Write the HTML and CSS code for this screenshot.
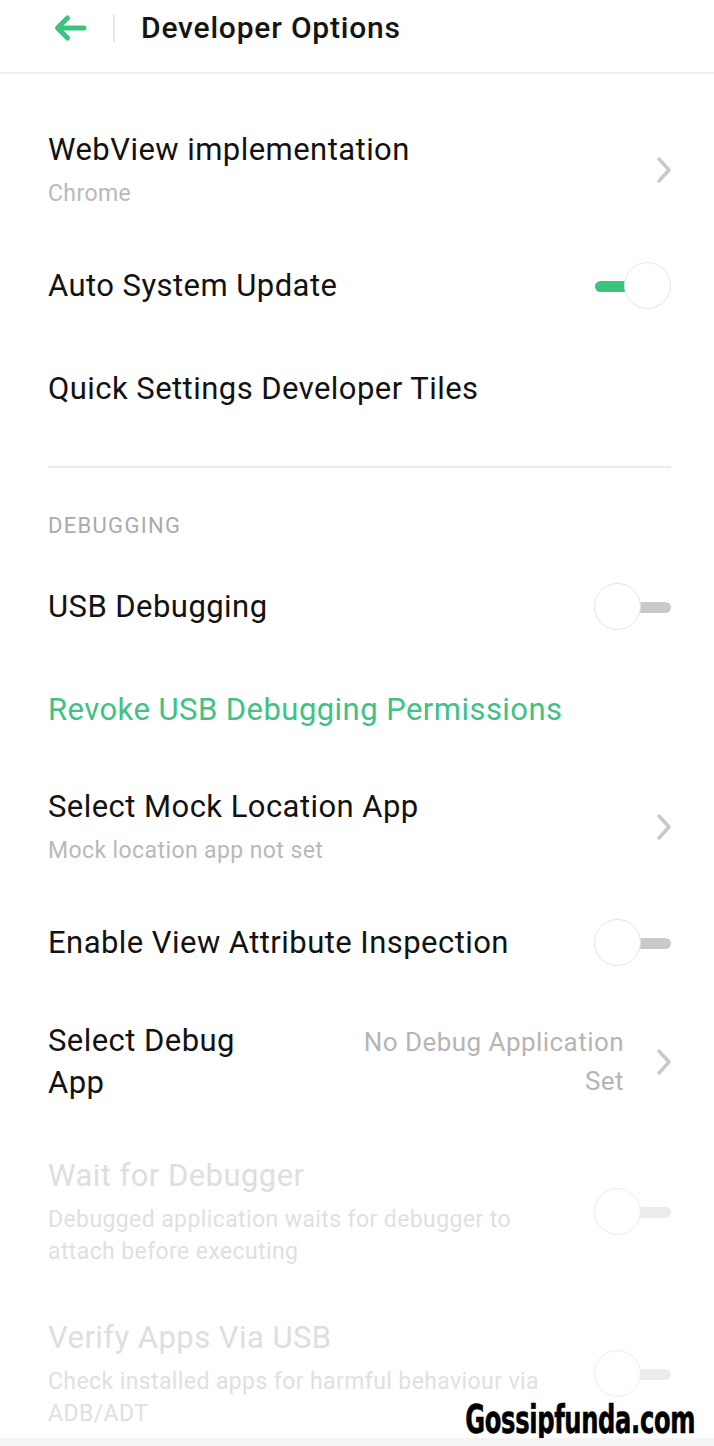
FILE: index.html
```html
<!DOCTYPE html>
<html lang="en">
<head>
<meta charset="utf-8">
<title>Developer Options</title>
<link rel="stylesheet" href="styles.css">
</head>
<body>
<div class="screen">
  <header class="topbar">
    <svg class="back" width="34" height="28" viewBox="0 0 34 28" aria-hidden="true">
      <path d="M31 14 H5 M14.5 4 L4.5 14 L14.5 24" fill="none" stroke="#3cc47f" stroke-width="5" stroke-linecap="round" stroke-linejoin="round"/>
    </svg>
    <span class="vsep"></span>
    <h1 class="title">Developer Options</h1>
  </header>

  <main class="list">
    <div class="row two">
      <div class="text">
        <div class="label">WebView implementation</div>
        <div class="sub">Chrome</div>
      </div>
      <svg class="chev" width="16" height="28" viewBox="0 0 16 28" aria-hidden="true"><path d="M3 3 L13 14 L3 25" fill="none" stroke="#c9c9c9" stroke-width="3.5" stroke-linecap="round" stroke-linejoin="round"/></svg>
    </div>

    <div class="row">
      <div class="text"><div class="label">Auto System Update</div></div>
      <span class="switch on"><span class="track"></span><span class="knob"></span></span>
    </div>

    <div class="row">
      <div class="text"><div class="label">Quick Settings Developer Tiles</div></div>
    </div>

    <hr class="divider">

    <div class="section">DEBUGGING</div>

    <div class="row">
      <div class="text"><div class="label">USB Debugging</div></div>
      <span class="switch"><span class="track"></span><span class="knob"></span></span>
    </div>

    <div class="row">
      <div class="text"><div class="label link">Revoke USB Debugging Permissions</div></div>
    </div>

    <div class="row two">
      <div class="text">
        <div class="label">Select Mock Location App</div>
        <div class="sub">Mock location app not set</div>
      </div>
      <svg class="chev" width="16" height="28" viewBox="0 0 16 28" aria-hidden="true"><path d="M3 3 L13 14 L3 25" fill="none" stroke="#c9c9c9" stroke-width="3.5" stroke-linecap="round" stroke-linejoin="round"/></svg>
    </div>

    <div class="row">
      <div class="text"><div class="label">Enable View Attribute Inspection</div></div>
      <span class="switch"><span class="track"></span><span class="knob"></span></span>
    </div>

    <div class="row debug">
      <div class="text narrow"><div class="label tall">Select Debug App</div></div>
      <div class="value">No Debug Application Set</div>
      <svg class="chev" width="16" height="28" viewBox="0 0 16 28" aria-hidden="true"><path d="M3 3 L13 14 L3 25" fill="none" stroke="#c9c9c9" stroke-width="3.5" stroke-linecap="round" stroke-linejoin="round"/></svg>
    </div>

    <div class="row two disabled">
      <div class="text">
        <div class="label">Wait for Debugger</div>
        <div class="sub">Debugged application waits for debugger to attach before executing</div>
      </div>
      <span class="switch"><span class="track"></span><span class="knob"></span></span>
    </div>

    <div class="row two disabled">
      <div class="text">
        <div class="label">Verify Apps Via USB</div>
        <div class="sub">Check installed apps for harmful behaviour via ADB/ADT</div>
      </div>
      <span class="switch"><span class="track"></span><span class="knob"></span></span>
    </div>
  </main>

  <div class="watermark"><span class="wm-text">Gossipfunda.com</span></div>
  <div class="bottom-strip"></div>
</div>
</body>
</html>
```

FILE: styles.css
```css
html, body {
  margin: 0;
  padding: 0;
  background: #ffffff;
}

body {
  font-family: Roboto, "Noto Sans", "Liberation Sans", sans-serif;
  color: #111111;
}

.screen {
  position: relative;
  width: 714px;
  height: 1446px;
  overflow: hidden;
  background: #ffffff;
}

.topbar {
  display: flex;
  align-items: center;
  height: 72px;
  padding-left: 53px;
  border-bottom: 2px solid #eeeeee;
  box-sizing: content-box;
  background: #ffffff;
}

.back {
  display: block;
  margin-top: -16px;
}

.vsep {
  width: 2px;
  height: 27px;
  background: #e6e6e6;
  margin: -16px 0 0 26px;
}

.title {
  margin: -16px 0 0 26px;
  font-size: 30px;
  font-weight: 500;
  line-height: 36px;
  color: #141414;
  letter-spacing: 0.8px;
}

.list {
  display: flex;
  flex-direction: column;
  padding-top: 30px;
}

.row {
  display: flex;
  align-items: center;
  min-height: 51px;
  padding: 26px 43px 26px 48px;
}

.row.two {
  padding-bottom: 24px;
}

.text {
  flex: 1;
  min-width: 0;
}

.label {
  font-size: 31px;
  line-height: 40px;
  color: #121212;
  letter-spacing: 0.45px;
}

.label.link {
  color: #40c282;
}

.sub {
  margin-top: 8px;
  font-size: 23px;
  line-height: 32px;
  color: #b9b9b9;
  letter-spacing: 0.4px;
  padding-right: 50px;
}

.chev {
  display: block;
  flex: none;
  margin-right: -1px;
}

.switch {
  position: relative;
  flex: none;
  width: 77px;
  height: 48px;
}

.switch .track {
  position: absolute;
  left: 1px;
  right: 0;
  top: 19px;
  height: 11px;
  border-radius: 6px;
  background: #c9c9c9;
}

.switch .knob {
  position: absolute;
  left: 0;
  top: 0;
  width: 45px;
  height: 45px;
  border-radius: 50%;
  background: #ffffff;
  border: 1.5px solid #e4e4e4;
}

.switch.on .track {
  background: #3cc47f;
  right: 40px;
}

.switch.on .knob {
  left: auto;
  right: 0;
}

.disabled .label {
  color: #dedede;
}

.disabled .sub {
  color: #e0e0e0;
}

.disabled .switch .track {
  background: #ececec;
}

.disabled .switch .knob {
  border-color: #ececec;
}

.divider {
  margin: 26px 43px 0 48px;
  border: 0;
  height: 2px;
  background: #ebebeb;
}

.section {
  margin-top: 44px;
  padding-left: 48px;
  font-size: 22px;
  line-height: 28px;
  color: #ababab;
  letter-spacing: 1.3px;
}

.section + .row {
  margin-top: 15px;
}

.debug .narrow {
  flex: 0 0 230px;
}

.label.tall {
  line-height: 42px;
}

.value {
  flex: 1;
  margin-right: 32px;
  padding-left: 50px;
  text-align: right;
  font-size: 26px;
  line-height: 39px;
  color: #b5b5b5;
  letter-spacing: 0.45px;
}

.watermark {
  position: absolute;
  right: 0;
  bottom: 9px;
  height: 34px;
  padding: 0 19px 0 8px;
  background: #ffffff;
  display: flex;
  align-items: center;
  justify-content: flex-end;
  overflow: visible;
}

.wm-text {
  display: inline-block;
  font-family: "DejaVu Sans Condensed", "DejaVu Sans", sans-serif;
  font-stretch: condensed;
  font-weight: 700;
  font-size: 39px;
  line-height: 34px;
  color: #000000;
  white-space: nowrap;
  transform: scaleX(0.69);
  transform-origin: right center;
  letter-spacing: -0.5px;
  -webkit-text-stroke: 0.6px #000000;
}

.bottom-strip {
  position: absolute;
  left: 0;
  right: 0;
  bottom: 0;
  height: 8px;
  background: #f4f4f4;
}
```
